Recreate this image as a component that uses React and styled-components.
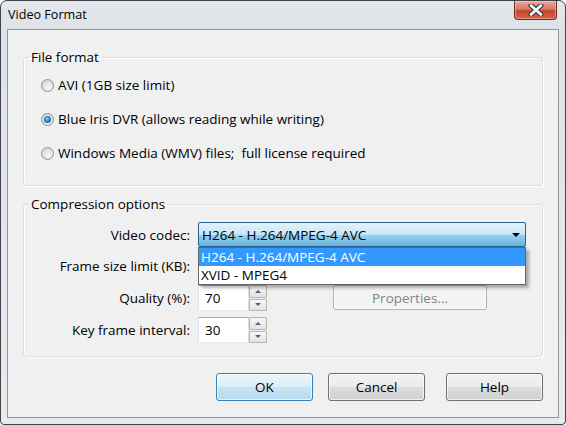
import styled, { createGlobalStyle } from "styled-components";

const GlobalStyle = createGlobalStyle`
  html, body {
    margin: 0;
    padding: 0;
    background: #ffffff;
  }
  body {
    font-family: "Segoe UI", "Open Sans", sans-serif;
    font-size: 13.5px;
    color: #000;
  }
`;

const Window = styled.div`
  width: 566px;
  height: 425px;
  box-sizing: border-box;
  border: 1px solid #3f444a;
  border-radius: 7px 7px 4px 4px;
  background: linear-gradient(180deg, #e4e8ec 0%, #dde2e7 28px, #e8ebee 100%);
  padding: 0 6px 6px;
  display: flex;
  flex-direction: column;
  overflow: hidden;
`;

const TitleBar = styled.div`
  height: 28px;
  display: flex;
  justify-content: space-between;
  align-items: flex-start;
  flex-shrink: 0;
`;

const Title = styled.div`
  margin: 6px 0 0 1px;
  font-size: 12.6px;
  line-height: 16px;
  color: #000;
`;

const CloseButton = styled.div`
  width: 43px;
  height: 19px;
  margin-right: 2px;
  box-sizing: border-box;
  border: 1px solid #6d2b22;
  border-top: none;
  border-radius: 0 0 4px 4px;
  background: linear-gradient(180deg, #e9a99b 0%, #d9785f 45%, #c7462c 55%, #d2654a 100%);
  box-shadow: inset 0 0 0 1px rgba(255, 255, 255, 0.35);
  display: flex;
  align-items: center;
  justify-content: center;
`;

const Client = styled.div`
  flex: 1;
  border: 1px solid #8e959c;
  background: #f0f0f0;
  padding: 18px 15px 16px;
  display: flex;
  flex-direction: column;
`;

const Group = styled.fieldset`
  margin: ${(p) => (p.$first ? "0" : "9px 0 0")};
  padding: 0;
  border: 1px solid #d5dfe5;
  border-radius: 3px;
  box-shadow: inset 1px 1px 0 #ffffff, 1px 1px 0 #ffffff;
  min-width: 0;
`;

const Legend = styled.legend`
  margin-left: 5px;
  padding: 0 2px;
  line-height: 18px;
  color: #000;
`;

const RadioList = styled.div`
  display: flex;
  flex-direction: column;
  padding: 2px 0 15px 17px;
`;

const RadioRow = styled.label`
  height: 34px;
  display: flex;
  align-items: center;
  gap: 4px;
  white-space: pre;
`;

const RadioCircle = styled.span`
  width: 13px;
  height: 13px;
  box-sizing: border-box;
  border-radius: 50%;
  border: 1px solid #8f9496;
  background: radial-gradient(circle at 60% 65%, #f8f8f8 0%, #dcdcdc 60%, #c9c9c9 100%);
  display: flex;
  align-items: center;
  justify-content: center;
  flex-shrink: 0;
  &::after {
    content: "";
    width: 7px;
    height: 7px;
    border-radius: 50%;
    display: ${(p) => (p.$checked ? "block" : "none")};
    background: radial-gradient(circle at 45% 40%, #8fd3ff 0%, #2a83c6 45%, #0f3f73 100%);
  }
`;

const FormGrid = styled.div`
  display: grid;
  grid-template-columns: 166px 1fr;
  grid-template-rows: 25px 26px 26px 26px;
  column-gap: 8px;
  row-gap: 6px;
  padding: 9px 16px 13px 0;
`;

const FieldLabel = styled.div`
  text-align: right;
  align-self: center;
  white-space: nowrap;
`;

const ControlRow = styled.div`
  display: flex;
  align-items: stretch;
  position: relative;
`;

const Combo = styled.div`
  flex: 1;
  position: relative;
  box-sizing: border-box;
  border: 1px solid #2c628b;
  border-radius: 2px;
  background: linear-gradient(180deg, #e5f4fc 0%, #c4e5f6 50%, #98d1ef 51%, #68b3db 100%);
  display: flex;
  align-items: center;
  padding-left: 3px;
  padding-right: 4px;
`;

const ComboText = styled.span`
  flex: 1;
`;

const ComboArrow = styled.span`
  width: 0;
  height: 0;
  border-left: 4px solid transparent;
  border-right: 4px solid transparent;
  border-top: 4px solid #000;
  margin-right: 1px;
`;

const DropList = styled.div`
  position: absolute;
  top: 100%;
  left: -1px;
  right: -1px;
  margin-top: 1px;
  box-sizing: border-box;
  border: 1px solid #646464;
  background: #fff;
  box-shadow: 3px 3px 3px rgba(0, 0, 0, 0.3);
  z-index: 5;
`;

const DropItem = styled.div`
  height: 18px;
  line-height: 18px;
  padding-left: 2px;
  background: ${(p) => (p.$selected ? "#3399ff" : "#ffffff")};
  color: ${(p) => (p.$selected ? "#ffffff" : "#000000")};
`;

const TextBox = styled.div`
  width: 51px;
  box-sizing: border-box;
  border: 1px solid #abadb3;
  border-left-color: #e2e3ea;
  border-right-color: #dbdfe6;
  border-bottom-color: #e3e9ef;
  background: #fff;
  display: flex;
  align-items: center;
  padding-left: 6px;
`;

const Spinner = styled.div`
  width: 18px;
  display: flex;
  flex-direction: column;
  gap: 1px;
`;

const SpinButton = styled.div`
  flex: 1;
  box-sizing: border-box;
  border: 1px solid #b4b4b4;
  border-radius: 1px;
  background: linear-gradient(180deg, #f6f6f6 0%, #e4e4e4 100%);
  display: flex;
  align-items: center;
  justify-content: center;
  &::after {
    content: "";
    width: 0;
    height: 0;
    border-left: 3px solid transparent;
    border-right: 3px solid transparent;
    ${(p) =>
      p.$up ? "border-bottom: 3px solid #4a5f8c;" : "border-top: 3px solid #4a5f8c;"}
  }
`;

const PushButton = styled.div`
  width: ${(p) => p.$w || 97}px;
  height: ${(p) => p.$h || 28}px;
  box-sizing: border-box;
  margin-left: ${(p) => p.$ml || 0}px;
  border: 1px solid ${(p) => (p.$default ? "#3c7fb1" : p.$disabled ? "#adb2b5" : "#707070")};
  border-radius: 3px;
  background: ${(p) =>
    p.$disabled
      ? "#f4f4f4"
      : p.$default
      ? "linear-gradient(180deg, #eaf5fc 0%, #dcedf8 50%, #c8e3f4 51%, #b9d9ee 100%)"
      : "linear-gradient(180deg, #f2f2f2 0%, #ebebeb 50%, #dddddd 51%, #cfcfcf 100%)"};
  box-shadow: inset 0 0 0 1px rgba(255, 255, 255, 0.7);
  color: ${(p) => (p.$disabled ? "#838383" : "#000")};
  display: flex;
  align-items: center;
  justify-content: center;
`;

const ButtonBar = styled.div`
  margin-top: auto;
  display: flex;
  justify-content: flex-end;
  gap: 15px;
`;

const CloseGlyph = () => (
  <svg width="16" height="12" viewBox="0 0 16 12">
    <path d="M3 1.5 L13 10.5 M13 1.5 L3 10.5" stroke="#3d3d3d" strokeWidth="5" strokeLinecap="round" />
    <path d="M3 1.5 L13 10.5 M13 1.5 L3 10.5" stroke="#ffffff" strokeWidth="2.6" strokeLinecap="round" />
  </svg>
);

const SpinField = ({ value }) => (
  <>
    <TextBox>{value}</TextBox>
    <Spinner>
      <SpinButton $up />
      <SpinButton />
    </Spinner>
  </>
);

const formats = [
  { label: "AVI (1GB size limit)", checked: false },
  { label: "Blue Iris DVR (allows reading while writing)", checked: true },
  { label: "Windows Media (WMV) files;  full license required", checked: false },
];

export default function App() {
  return (
    <>
      <GlobalStyle />
      <Window>
        <TitleBar>
          <Title>Video Format</Title>
          <CloseButton>
            <CloseGlyph />
          </CloseButton>
        </TitleBar>
        <Client>
          <Group $first>
            <Legend>File format</Legend>
            <RadioList>
              {formats.map((f) => (
                <RadioRow key={f.label}>
                  <RadioCircle $checked={f.checked} />
                  {f.label}
                </RadioRow>
              ))}
            </RadioList>
          </Group>
          <Group>
            <Legend>Compression options</Legend>
            <FormGrid>
              <FieldLabel>Video codec:</FieldLabel>
              <ControlRow>
                <Combo>
                  <ComboText>H264 - H.264/MPEG-4 AVC</ComboText>
                  <ComboArrow />
                  <DropList>
                    <DropItem $selected>H264 - H.264/MPEG-4 AVC</DropItem>
                    <DropItem>XVID - MPEG4</DropItem>
                  </DropList>
                </Combo>
              </ControlRow>
              <FieldLabel>Frame size limit (KB):</FieldLabel>
              <ControlRow>
                <SpinField value="" />
              </ControlRow>
              <FieldLabel>Quality (%):</FieldLabel>
              <ControlRow>
                <SpinField value="70" />
                <PushButton $disabled $w={154} $h={25} $ml={66}>
                  Properties...
                </PushButton>
              </ControlRow>
              <FieldLabel>Key frame interval:</FieldLabel>
              <ControlRow>
                <SpinField value="30" />
              </ControlRow>
            </FormGrid>
          </Group>
          <ButtonBar>
            <PushButton $default>OK</PushButton>
            <PushButton>Cancel</PushButton>
            <PushButton $ml={6}>Help</PushButton>
          </ButtonBar>
        </Client>
      </Window>
    </>
  );
}
